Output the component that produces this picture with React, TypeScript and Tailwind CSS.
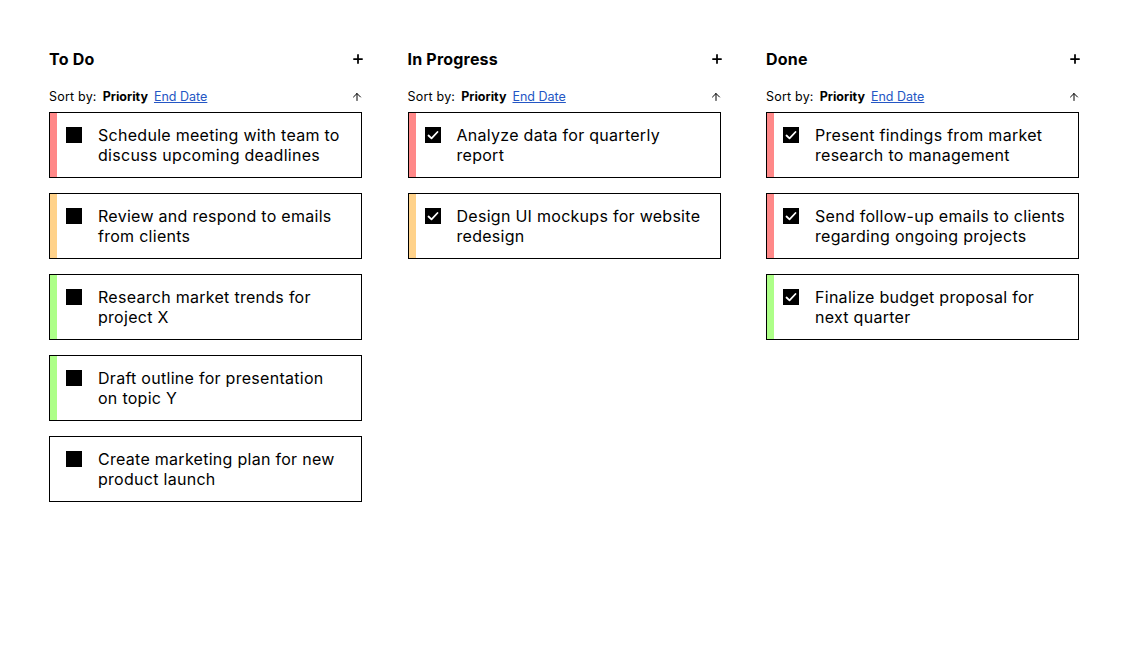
import { ArrowUp, Plus } from "lucide-react";

type Task = { id: string; title: string; priority: "high" | "medium" | "low" | "none"; done: boolean };

type Column = { id: string; name: string; tasks: Task[] };

// titles keep their line breaks so the cards wrap the same way everywhere
const columns: Column[] = [
  {
    id: "todo",
    name: "To Do",
    tasks: [
      { id: "1", title: "Schedule meeting with team to\ndiscuss upcoming deadlines", priority: "high", done: false },
      { id: "2", title: "Review and respond to emails\nfrom clients", priority: "medium", done: false },
      { id: "3", title: "Research market trends for\nproject X", priority: "low", done: false },
      { id: "4", title: "Draft outline for presentation\non topic Y", priority: "low", done: false },
      { id: "5", title: "Create marketing plan for new\nproduct launch", priority: "none", done: false },
    ],
  },
  {
    id: "progress",
    name: "In Progress",
    tasks: [
      { id: "6", title: "Analyze data for quarterly\nreport", priority: "high", done: true },
      { id: "7", title: "Design UI mockups for website\nredesign", priority: "medium", done: true },
    ],
  },
  {
    id: "done",
    name: "Done",
    tasks: [
      { id: "8", title: "Present findings from market\nresearch to management", priority: "high", done: true },
      { id: "9", title: "Send follow-up emails to clients\nregarding ongoing projects", priority: "high", done: true },
      { id: "10", title: "Finalize budget proposal for\nnext quarter", priority: "low", done: true },
    ],
  },
];

const barColor: Record<Task["priority"], string> = {
  high: "bg-[#ff8888]",
  medium: "bg-[#ffd28a]",
  low: "bg-[#adff88]",
  none: "bg-white",
};

function Checkbox({ checked }: { checked: boolean }) {
  return (
    <span className="mt-[2px] flex h-4 w-4 shrink-0 items-center justify-center bg-black">
      {checked && (
        <svg viewBox="0 0 16 16" className="h-4 w-4" fill="none">
          <path d="M3.5 8.5l3 2.8 6-6.3" stroke="white" strokeWidth="1.8" strokeLinecap="round" strokeLinejoin="round" />
        </svg>
      )}
    </span>
  );
}

function TaskCard({ task }: { task: Task }) {
  return (
    <div className="flex h-[66px] border border-black bg-white">
      <div className={`w-[7px] shrink-0 ${barColor[task.priority]}`} />
      <div className="flex items-start gap-4 pl-[9px] pr-2 pt-[12px]">
        <Checkbox checked={task.done} />
        <p className="whitespace-pre-line text-[16px] leading-5 tracking-[0.28px] text-black">{task.title}</p>
      </div>
    </div>
  );
}

function BoardColumn({ column }: { column: Column }) {
  return (
    <div className="w-[313px]">
      <div className="flex items-center justify-between">
        <h2 className="text-[16px] font-bold leading-5 tracking-[0.2px]">{column.name}</h2>
        <Plus className="-mr-[3px] h-3.5 w-3.5" strokeWidth={3} />
      </div>
      <div className="mt-[19px] flex items-center justify-between">
        <div className="flex items-center text-[12.5px]">
          <span className="tracking-[0.2px]">Sort by:</span>
          <span className="ml-[6px] font-bold">Priority</span>
          <button className="ml-[6px] text-[#2456c4] underline">End Date</button>
        </div>
        <ArrowUp className="-mr-[1px] h-3 w-3" strokeWidth={2} />
      </div>
      <div className="mt-[5px] flex flex-col gap-[15px]">
        {column.tasks.map((t) => (
          <TaskCard key={t.id} task={t} />
        ))}
      </div>
    </div>
  );
}

export default function App() {
  return (
    <div className="min-h-screen bg-white px-[49px] pt-[49px] text-black" style={{ fontFamily: "Inter, 'Noto Sans', sans-serif" }}>
      <div className="flex gap-[45.5px]">
        {columns.map((c) => (
          <BoardColumn key={c.id} column={c} />
        ))}
      </div>
    </div>
  );
}
